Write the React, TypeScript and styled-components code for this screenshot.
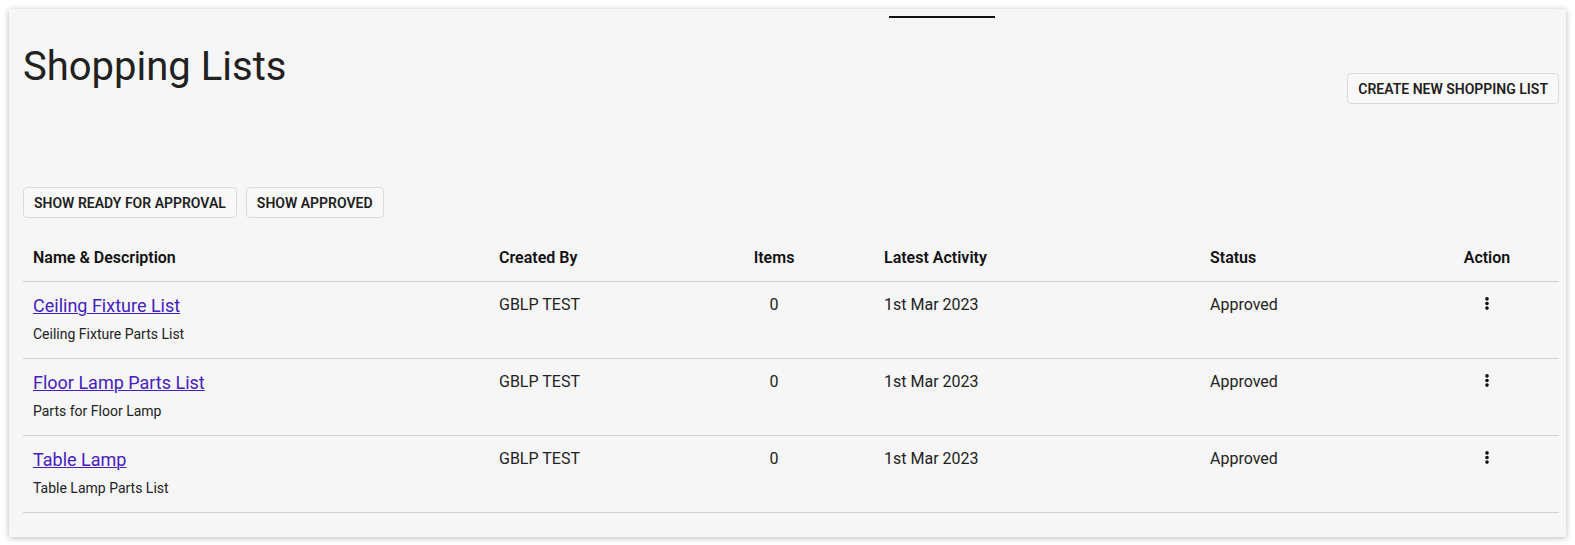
import styled, { createGlobalStyle } from "styled-components";

const GlobalStyle = createGlobalStyle`
  html, body {
    margin: 0;
    padding: 0;
    background: #ffffff;
    font-family: Roboto, "Liberation Sans", Arial, sans-serif;
  }
`;

const Page = styled.div`
  padding: 9px 9px 8px 9px;
`;

const Card = styled.div`
  background-color: #f6f6f6;
  box-shadow: 0 1px 6px rgba(0, 0, 0, 0.28);
  padding: 7px 7px 24px 14px;
  box-sizing: border-box;
`;

// leftover active-tab underline from the nav above
const TabIndicator = styled.div`
  width: 106px;
  height: 2px;
  margin-left: 866px;
  background-color: #111;
`;

const Header = styled.div`
  display: flex;
  justify-content: space-between;
  align-items: flex-start;
  margin-top: 25px;
`;

const Title = styled.h1`
  margin: 0;
  font-size: 40px;
  line-height: 48px;
  font-weight: 400;
  color: #212121;
`;

const Button = styled.button<{ $top?: number }>`
  height: 31px;
  padding: 0 10px;
  margin-top: ${(p) => p.$top ?? 0}px;
  border: 1px solid #dcdcdc;
  border-radius: 4px;
  background-color: #f8f8f8;
  font-family: Roboto, "Liberation Sans", Arial, sans-serif;
  font-size: 14px;
  font-weight: 600;
  color: #1e1e1e;
  text-transform: uppercase;
  cursor: pointer;
`;

const FilterBar = styled.div`
  display: flex;
  gap: 9px;
  margin-top: 83px;
`;

const Table = styled.div`
  display: grid;
  grid-template-columns: 466px 185px 200px 326px 215px 144px;
  margin-top: 16px;
`;

const HeadCell = styled.div<{ $center?: boolean }>`
  padding: 12px 10px 11px;
  font-size: 16px;
  line-height: 24px;
  font-weight: 600;
  color: #111;
  text-align: ${(p) => (p.$center ? "center" : "left")};
  border-bottom: 1px solid #cfcfcf;
`;

const Cell = styled.div<{ $center?: boolean }>`
  padding: 11px 10px 13px;
  font-size: 16px;
  line-height: 24px;
  color: #222;
  text-align: ${(p) => (p.$center ? "center" : "left")};
  border-bottom: 1px solid #d2d2d2;
  display: flex;
  flex-direction: column;
  align-items: ${(p) => (p.$center ? "center" : "flex-start")};
`;

const NameCell = styled(Cell)`
  padding-top: 10px;
  padding-bottom: 14px;
`;

const ListLink = styled.a`
  font-size: 18px;
  line-height: 27px;
  color: #4520c0;
  text-decoration: underline;
  text-decoration-thickness: 1px;
`;

const Description = styled.div`
  margin-top: 5px;
  font-size: 14px;
  line-height: 20px;
  color: #222;
`;

const ActionButton = styled.span`
  display: flex;
  align-items: center;
  height: 21px;
  cursor: pointer;
`;

const MoreIcon = () => (
  <svg width="4" height="13" viewBox="0 0 4 13">
    <circle cx="2" cy="1.9" r="1.8" fill="#111" />
    <circle cx="2" cy="6.5" r="1.8" fill="#111" />
    <circle cx="2" cy="11.1" r="1.8" fill="#111" />
  </svg>
);

const lists = [
  { name: "Ceiling Fixture List", description: "Ceiling Fixture Parts List" },
  { name: "Floor Lamp Parts List", description: "Parts for Floor Lamp" },
  { name: "Table Lamp", description: "Table Lamp Parts List" },
];

export default function App() {
  return (
    <>
      <GlobalStyle />
      <Page>
        <Card>
          <TabIndicator />
          <Header>
            <Title>Shopping Lists</Title>
            <Button $top={30}>Create New Shopping List</Button>
          </Header>
          <FilterBar>
            <Button>Show Ready For Approval</Button>
            <Button>Show Approved</Button>
          </FilterBar>
          <Table>
            <HeadCell>Name &amp; Description</HeadCell>
            <HeadCell>Created By</HeadCell>
            <HeadCell $center>Items</HeadCell>
            <HeadCell>Latest Activity</HeadCell>
            <HeadCell>Status</HeadCell>
            <HeadCell $center>Action</HeadCell>
            {lists.map((item) => (
              <>
                <NameCell key={item.name + "-name"}>
                  <ListLink href="#">{item.name}</ListLink>
                  <Description>{item.description}</Description>
                </NameCell>
                <Cell>GBLP TEST</Cell>
                <Cell $center>0</Cell>
                <Cell>1st Mar 2023</Cell>
                <Cell>Approved</Cell>
                <Cell $center>
                  <ActionButton>
                    <MoreIcon />
                  </ActionButton>
                </Cell>
              </>
            ))}
          </Table>
        </Card>
      </Page>
    </>
  );
}
